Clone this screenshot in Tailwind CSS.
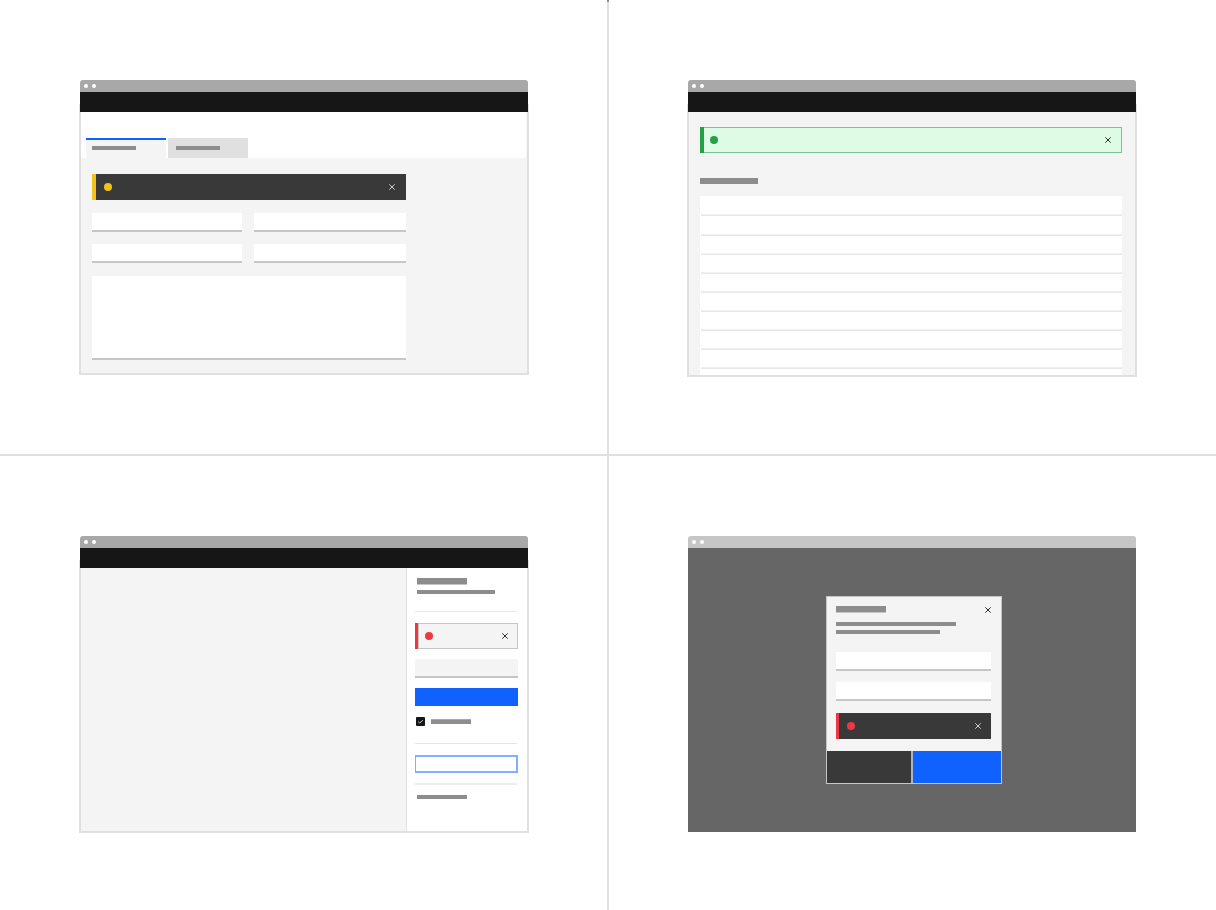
<!DOCTYPE html>
<html lang="en">
<head>
  <meta charset="UTF-8" />
  <meta name="viewport" content="width=device-width, initial-scale=1.0"/>
  <title>Inline notification placement</title>
  <script src="https://cdn.jsdelivr.net/npm/@tailwindcss/browser@4"></script>
</head>
<body class="bg-[#e0e0e0] font-sans">

  <!-- Shared close icon -->
  <svg class="hidden" aria-hidden="true">
    <symbol id="close" viewBox="0 0 6 6">
      <path d="M.3.3 5.7 5.7M5.7.3.3 5.7" fill="none" stroke="currentColor" stroke-width=".9"/>
    </symbol>
  </svg>

  <main class="relative grid min-h-screen grid-cols-2 grid-rows-2 gap-0.5">
    <span class="absolute top-0 left-1/2 h-0.5 w-0.5 -translate-x-1/2 bg-[#8d8d8d]"></span>

    <!-- Form page with a warning -->
    <section class="bg-white pt-20 pr-[79px] pb-[76px] pl-20">
      <div class="relative z-10">
        <div class="flex h-3 items-center gap-1 rounded-t-[3px] bg-[#a8a8a8] px-1">
          <span class="size-1 rounded-full bg-white"></span>
          <span class="size-1 rounded-full bg-white"></span>
        </div>
        <header class="h-5 bg-[#161616]"></header>
      </div>
      <div class="-mx-px -mt-2 border-x-2 border-b-2 border-[#e0e0e0] bg-[#f4f4f4] pt-2">
        <nav class="mr-px flex gap-0.5 bg-white pt-[26px] pl-[5px]">
          <a href="#" aria-label="First tab" class="h-5 w-20 border-t-2 border-[#0f62fe] bg-[#f4f4f4] px-1.5 pt-1.5">
            <span class="block h-1 w-11 bg-[#8d8d8d]"></span>
          </a>
          <a href="#" aria-label="Second tab" class="h-5 w-20 bg-[#e0e0e0] px-2 pt-2">
            <span class="block h-1 w-11 bg-[#8d8d8d]"></span>
          </a>
        </nav>
        <form class="ml-[11px] max-w-[314px] pt-4 pb-[13px]">
          <div role="status" class="flex h-[26px] items-center border-l-4 border-[#f1c21b] bg-[#393939] pr-[11px] pl-2 text-[#e0e0e0]">
            <span class="size-2 rounded-full bg-[#f1c21b]"></span>
            <button type="button" aria-label="Close" class="ml-auto"><svg class="size-1.5"><use href="#close"/></svg></button>
          </div>
          <div class="mt-[13px] grid grid-cols-[150fr_152fr] gap-x-3 gap-y-3">
            <input type="text" aria-label="Field one" class="h-[19px] w-full border-b-2 border-[#c6c6c6] bg-white" />
            <input type="text" aria-label="Field two" class="h-[19px] w-full border-b-2 border-[#c6c6c6] bg-white" />
            <input type="text" aria-label="Field three" class="h-[19px] w-full border-b-2 border-[#c6c6c6] bg-white" />
            <input type="text" aria-label="Field four" class="h-[19px] w-full border-b-2 border-[#c6c6c6] bg-white" />
          </div>
          <textarea aria-label="Details" class="mt-[13px] block h-[84px] w-full resize-none border-b-2 border-[#c6c6c6] bg-white"></textarea>
        </form>
      </div>
    </section>

    <!-- List page with a success message -->
    <section class="bg-white pt-20 pr-20 pb-[76px] pl-[79px]">
      <div class="relative z-10">
        <div class="flex h-3 items-center gap-1 rounded-t-[3px] bg-[#a8a8a8] px-1">
          <span class="size-1 rounded-full bg-white"></span>
          <span class="size-1 rounded-full bg-white"></span>
        </div>
        <header class="h-5 bg-[#161616]"></header>
      </div>
      <div class="-mx-px -mt-2 border-x-2 border-b-2 border-[#e0e0e0] bg-[#f4f4f4] pt-[23px] pr-[13px] pl-[11px]">
        <div role="status" class="flex h-[26px] bg-[#24a148]">
          <div class="ml-1 flex flex-1 items-center border-y border-r border-[#7bc491] bg-[#defbe6] pr-2.5 pl-1.5 text-[#161616]">
            <span class="size-2 rounded-full bg-[#24a148]"></span>
            <button type="button" aria-label="Close" class="ml-auto"><svg class="size-1.5"><use href="#close"/></svg></button>
          </div>
        </div>
        <div class="mt-[25px] h-1.5 w-[58px] bg-[#8d8d8d]"></div>
        <ul class="mt-3 bg-white pb-1.5 pl-px">
          <li class="h-5 border-b border-[#e8e8e8] inset-shadow-[0_-1px_0_#f0f0f0]"></li>
          <li class="h-5 border-b border-[#e8e8e8] inset-shadow-[0_-1px_0_#f0f0f0]"></li>
          <li class="h-[19px] border-b border-[#e8e8e8] inset-shadow-[0_-1px_0_#f0f0f0]"></li>
          <li class="h-[19px] border-b border-[#e8e8e8] inset-shadow-[0_-1px_0_#f0f0f0]"></li>
          <li class="h-[19px] border-b border-[#e8e8e8] inset-shadow-[0_-1px_0_#f0f0f0]"></li>
          <li class="h-[19px] border-b border-[#e8e8e8] inset-shadow-[0_-1px_0_#f0f0f0]"></li>
          <li class="h-[19px] border-b border-[#e8e8e8] inset-shadow-[0_-1px_0_#f0f0f0]"></li>
          <li class="h-[19px] border-b border-[#e8e8e8] inset-shadow-[0_-1px_0_#f0f0f0]"></li>
          <li class="h-[19px] border-b border-[#e8e8e8] inset-shadow-[0_-1px_0_#f0f0f0]"></li>
        </ul>
      </div>
    </section>

    <!-- Side panel with an error -->
    <section class="bg-white pt-20 pr-[79px] pb-[76px] pl-20">
      <div class="relative z-10">
        <div class="flex h-3 items-center gap-1 rounded-t-[3px] bg-[#a8a8a8] px-1">
          <span class="size-1 rounded-full bg-white"></span>
          <span class="size-1 rounded-full bg-white"></span>
        </div>
        <header class="h-5 bg-[#161616]"></header>
      </div>
      <div class="-mx-px -mt-2 flex justify-end border-x-2 border-b-2 border-[#e0e0e0] bg-[#f4f4f4] pt-2">
        <aside class="w-[121px] border-l border-[#e0e0e0] bg-white pt-2.5 pr-[9px] pb-8 pl-2">
          <div class="ml-0.5 h-[7px] w-[50px] border-b border-[#c6c6c6] bg-[#8d8d8d]"></div>
          <div class="mt-[5px] ml-0.5 h-1 w-[78px] bg-[#8d8d8d]"></div>
          <hr class="mt-[17px] mr-px border-[#e8e8e8]" />
          <div role="alert" class="mt-[11px] flex h-[26px] bg-[#ee3742]">
            <div class="ml-[3px] flex flex-1 items-center border border-[#c6c6c6] bg-[#f4f4f4] pr-[9px] pl-1.5 text-[#161616]">
              <span class="size-2 rounded-full bg-[#ee3742]"></span>
              <button type="button" aria-label="Close" class="ml-auto"><svg class="size-1.5"><use href="#close"/></svg></button>
            </div>
          </div>
          <input type="text" aria-label="Name" class="mt-2.5 block h-[19px] w-full border-b-2 border-[#c6c6c6] bg-[#f4f4f4]" />
          <button type="button" aria-label="Submit" class="mt-2.5 block h-[18px] w-full bg-[#0f62fe]"></button>
          <label class="mt-[11px] ml-px flex h-[9px] items-center gap-1.5">
            <span class="grid size-[9px]">
              <input type="checkbox" checked aria-label="Option" class="col-start-1 row-start-1 size-[9px] appearance-none rounded-[1px] bg-[#161616]" />
              <svg viewBox="0 0 9 9" class="pointer-events-none col-start-1 row-start-1 size-[9px]"><path d="M2.2 4.6 3.8 6 6.8 3.2" fill="none" stroke="#e0e0e0" stroke-width=".9"/></svg>
            </span>
            <span class="h-[5px] w-10 border-t border-[#a8a8a8] bg-[#8d8d8d]"></span>
          </label>
          <hr class="mt-[17px] mr-px border-[#e4e4e4]" />
          <button type="button" aria-label="Cancel" class="mt-[11px] block h-[18px] w-full border-2 border-l border-[#82aeff] bg-white"></button>
          <hr class="mt-2.5 mr-px border-t-2 border-[#ececec]" />
          <div class="mt-2.5 ml-0.5 h-1 w-[50px] bg-[#8d8d8d]"></div>
        </aside>
      </div>
    </section>

    <!-- Modal with an error -->
    <section class="bg-white pt-20 pr-20 pb-[76px] pl-[79px]">
      <div class="flex h-3 items-center gap-1 rounded-t-[3px] bg-[#c6c6c6] px-1">
        <span class="size-1 rounded-full bg-white"></span>
        <span class="size-1 rounded-full bg-white"></span>
      </div>
      <div class="flex justify-center bg-[#666666] py-12 pl-1">
        <div role="dialog" aria-label="Dialog" class="w-[176px] border border-[#c6c6c6] bg-[#f4f4f4]">
          <form class="pt-[9px] pr-2.5 pb-3 pl-[9px]">
            <div class="flex h-[7px] items-end justify-between text-[#161616]">
              <div class="h-[7px] w-[50px] border-b border-[#c6c6c6] bg-[#8d8d8d]"></div>
              <button type="button" aria-label="Close"><svg class="size-1.5"><use href="#close"/></svg></button>
            </div>
            <div class="mt-[9px] h-1 w-[120px] bg-[#8d8d8d]"></div>
            <div class="mt-1 h-1 w-[104px] bg-[#8d8d8d]"></div>
            <input type="text" aria-label="First field" class="mt-[18px] block h-[19px] w-full border-b-2 border-[#c6c6c6] bg-white" />
            <input type="text" aria-label="Second field" class="mt-[11px] block h-[19px] w-full border-b-2 border-[#c6c6c6] bg-white" />
            <div role="alert" class="mt-3 flex h-[26px] items-center border-l-[3px] border-[#ee3742] bg-[#393939] pr-2.5 pl-2 text-[#e0e0e0]">
              <span class="size-2 rounded-full bg-[#ee3742]"></span>
              <button type="button" aria-label="Close" class="ml-auto"><svg class="size-1.5"><use href="#close"/></svg></button>
            </div>
          </form>
          <div class="grid h-8 grid-cols-[84fr_88fr] gap-0.5 bg-[#a8b4c8]">
            <button type="button" aria-label="Cancel" class="bg-[#393939]"></button>
            <button type="button" aria-label="Save" class="bg-[#0f62fe]"></button>
          </div>
        </div>
      </div>
    </section>
  </main>
</body>
</html>
